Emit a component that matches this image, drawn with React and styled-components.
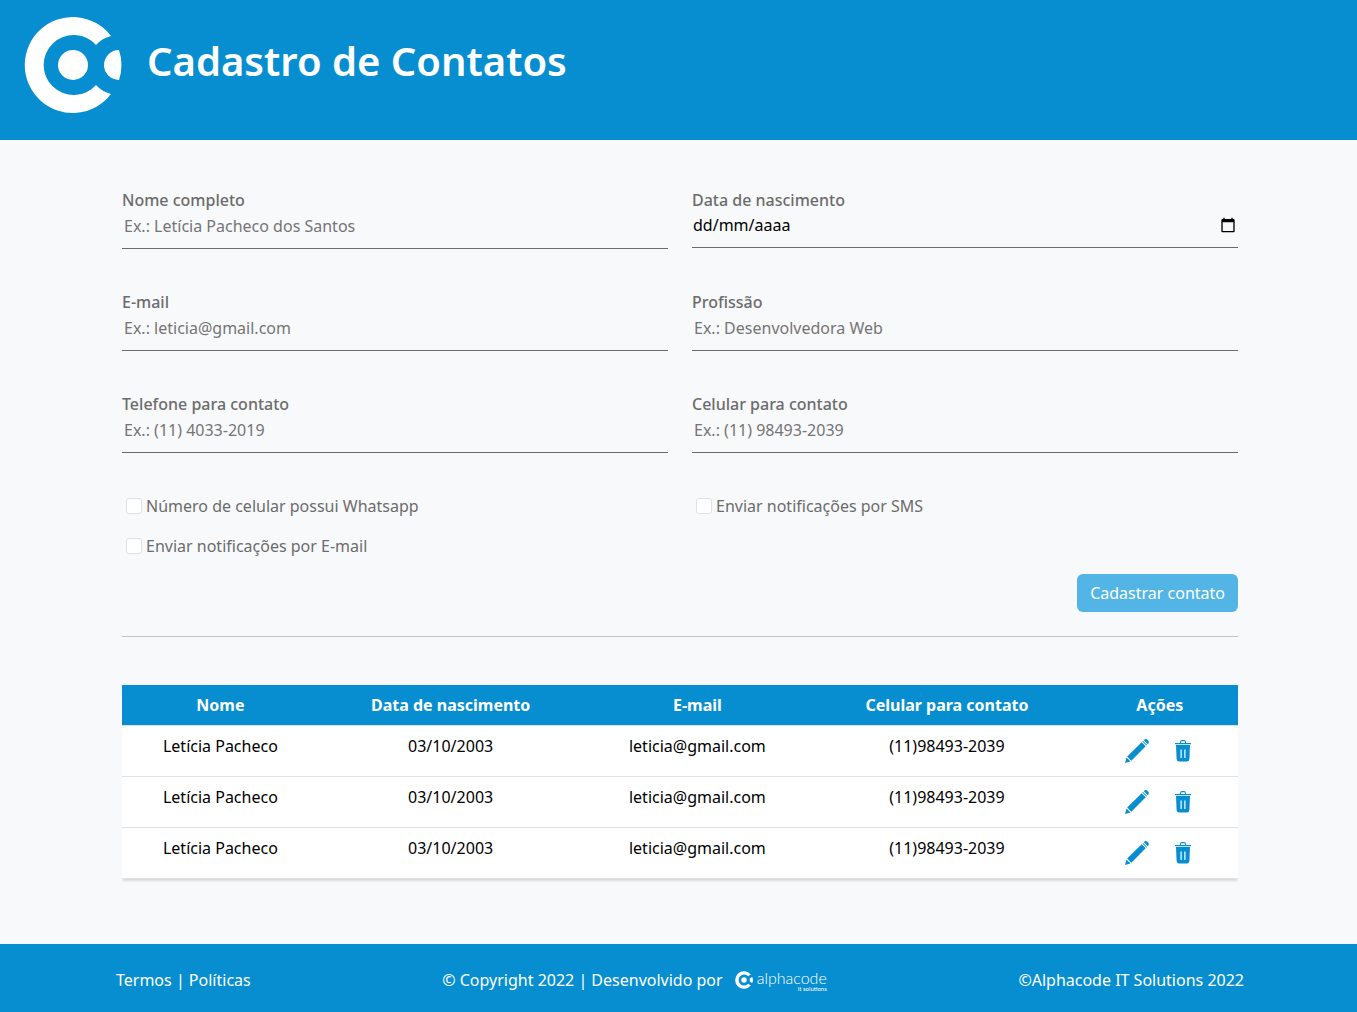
import React, { useState } from "react";
import styled, { createGlobalStyle, ThemeProvider } from "styled-components";

const theme = {
  primary: "#078ed0",
  primarySoft: "#53b5e6",
  muted: "#6c6c6c",
  page: "#f8f9fb",
  line: "#dee2e6",
};

const GlobalStyle = createGlobalStyle`
  *, *::before, *::after { box-sizing: border-box; }
  body {
    margin: 0;
    background: ${({ theme }) => theme.page};
    color: #000;
    font: 400 16px/24px "Noto Sans", "Open Sans", sans-serif;
  }
`;

const Page = styled.div`
  display: flex;
  flex-direction: column;
  min-height: 100vh;
`;

const Header = styled.header`
  display: flex;
  align-items: flex-start;
  gap: 25px;
  height: 140px;
  padding: 16px 24px;
  background: ${({ theme }) => theme.primary};
  color: #fff;
`;

const Title = styled.h1`
  margin: 21px 0 0;
  font-size: 40px;
  font-weight: 600;
  line-height: 48px;
`;

const Main = styled.main`
  flex: 1;
  width: 100%;
  max-width: 1143px;
  margin: 0 auto;
  padding: 48px 12px 64px 15px;
`;

const FormGrid = styled.form`
  display: grid;
  grid-template-columns: 1fr 1fr;
  column-gap: 24px;
`;

const Field = styled.div`
  display: flex;
  flex-direction: column;
  height: 102px;
`;

const Label = styled.label`
  color: ${({ theme }) => theme.muted};
  font-weight: 500;
`;

const InputLine = styled.div`
  display: flex;
  align-items: flex-start;
  height: ${({ $short }) => ($short ? "36px" : "37px")};
  border-bottom: 1px solid ${({ theme }) => theme.muted};
`;

const Input = styled.input`
  flex: 1;
  min-width: 0;
  height: 28px;
  padding: 1px 2px;
  border: 0;
  outline: 0;
  background: transparent;
  color: #000;
  font: inherit;

  &::placeholder {
    color: #757575;
    opacity: 1;
  }
`;

const DateInput = styled(Input)`
  height: 26px;
  padding: 1px;

  &::placeholder {
    color: #000;
  }
`;

const PickerButton = styled.button`
  display: flex;
  padding: 5px 2px;
  border: 0;
  background: transparent;
  cursor: pointer;
`;

const CheckRow = styled.div`
  display: flex;
  align-items: center;
  gap: 4px;
  height: 40px;
  padding: 0 4px 16px;
  color: ${({ theme }) => theme.muted};
`;

const Checkbox = styled.input`
  appearance: none;
  width: 16px;
  height: 16px;
  margin: 0;
  border: 1px solid ${({ theme }) => theme.line};
  border-radius: 3px;
  background: #fff;

  &:checked {
    background: ${({ theme }) => theme.primary};
  }
`;

const FormActions = styled.div`
  grid-column: 1 / -1;
  display: flex;
  justify-content: flex-end;
  padding-bottom: 24px;
  border-bottom: 1px solid #c1c3c4;
`;

const SubmitButton = styled.button`
  height: 38px;
  padding: 0 13px;
  border: 0;
  border-radius: 6px;
  background: ${({ theme }) => theme.primarySoft};
  color: #fff;
  font: inherit;
  cursor: pointer;
`;

const Table = styled.table`
  width: 100%;
  margin-top: 48px;
  border-collapse: collapse;
  background: #fff;
  text-align: center;
  box-shadow: 0 3px 2px -1px #00000020;
`;

const Th = styled.th`
  padding: 8px;
  background: ${({ theme }) => theme.primary};
  color: #fff;
  font-weight: 700;
`;

const Td = styled.td`
  height: 51px;
  padding: 8px;
  border-top: 1px solid ${({ theme }) => theme.line};
  border-bottom: 1px solid ${({ theme }) => theme.line};
  vertical-align: top;
`;

const RowActions = styled.div`
  display: flex;
  justify-content: center;
  gap: 4px;
`;

const IconButton = styled.button`
  display: flex;
  justify-content: center;
  width: 42px;
  padding: 5px 0;
  border: 0;
  background: transparent;
  color: ${({ theme }) => theme.primary};
  cursor: pointer;
`;

const Footer = styled.footer`
  background: ${({ theme }) => theme.primary};
  color: #fff;
`;

const FooterInner = styled.div`
  display: flex;
  align-items: center;
  justify-content: space-between;
  max-width: 1155px;
  height: 68px;
  margin: 0 auto;
  padding: 4px 12px 0 15px;
`;

const FooterLink = styled.a`
  color: inherit;
  text-decoration: none;
`;

const Credit = styled.span`
  display: flex;
  align-items: center;
  gap: 12px;
`;

const Brand = styled.span`
  display: flex;
  align-items: center;
  gap: 4px;
`;

const BrandText = styled.span`
  display: flex;
  flex-direction: column;
  align-items: flex-end;
  padding-top: 2px;
  font-family: Lato, sans-serif;
`;

const BrandName = styled.span`
  font-size: 16px;
  font-weight: 300;
  line-height: 14px;
`;

const BrandTag = styled.span`
  font-size: 6px;
  line-height: 7px;
`;

function LogoMark({ size }) {
  return (
    <svg width={size} height={size} viewBox="0 0 98 98" fill="#fff" aria-hidden="true">
      <path d="M87 20A48 48 0 1 0 87 78A30 30 0 0 1 72 69A30 30 0 1 1 72 29A30 30 0 0 1 87 20Z" />
      <circle cx="49" cy="49" r="15" />
      <path d="M95 34A15 15 0 0 0 95 64A48 48 0 0 0 95 34Z" />
    </svg>
  );
}

function CalendarIcon() {
  return (
    <svg width="16" height="16" viewBox="0 0 24 24" aria-hidden="true">
      <path d="M20 3h-1V1h-2v2H7V1H5v2H4c-1.100 0-2 .9-2 2v16c0 1.100.9 2 2 2h16c1.100 0 2-.9 2-2V5c0-1.100-.9-2-2-2zm0 18H4V8h16v13z" />
    </svg>
  );
}

function PencilIcon() {
  return (
    <svg width="24" height="24" viewBox="0 0 24 24" fill="currentColor" aria-hidden="true">
      <path d="M0 24l1.500-5.500 4 4zM2.200 17.600L16.700 3.300l4 4L6.300 21.700zM17.400 2.600l.7-.7 4 4-.7.700zM18.800 1.200c1.200-1.400 2.600-1.500 3.900-.2 1.500 1.400 1.500 2.800.1 4.200z" />
    </svg>
  );
}

function TrashIcon() {
  return (
    <svg width="24" height="24" viewBox="0 0 24 24" fill="currentColor" aria-hidden="true">
      <path d="M4 4h5V3q0-2 2-2h2q2 0 2 2v1h5v1.200H4zM10 4h4V3q0-.8-.8-.8h-2.400Q10 2.200 10 3z" fillRule="evenodd" />
      <path fillRule="evenodd" d="M5 6h14l-.6 14q-.2 2.500-2.500 2.500H8.100q-2.300 0-2.500-2.500zM9.500 10.500v8.500h1.200v-8.500zM13.300 10.500v8.500h1.200v-8.500z" />
    </svg>
  );
}

const fields = [
  { id: "nome", label: "Nome completo", placeholder: "Ex.: Letícia Pacheco dos Santos" },
  { id: "nascimento", label: "Data de nascimento", placeholder: "dd/mm/aaaa", date: true },
  { id: "email", label: "E-mail", placeholder: "Ex.: leticia@gmail.com", type: "email" },
  { id: "profissao", label: "Profissão", placeholder: "Ex.: Desenvolvedora Web" },
  { id: "telefone", label: "Telefone para contato", placeholder: "Ex.: (11) 4033-2019", type: "tel" },
  { id: "celular", label: "Celular para contato", placeholder: "Ex.: (11) 98493-2039", type: "tel" },
];

const options = [
  { id: "whatsapp", label: "Número de celular possui Whatsapp" },
  { id: "sms", label: "Enviar notificações por SMS" },
  { id: "aviso-email", label: "Enviar notificações por E-mail" },
];

const columns = ["Nome", "Data de nascimento", "E-mail", "Celular para contato", "Ações"];

const initialContacts = [1, 2, 3].map((id) => ({
  id,
  nome: "Letícia Pacheco",
  nascimento: "03/10/2003",
  email: "leticia@gmail.com",
  celular: "(11)98493-2039",
}));

export default function App() {
  const [contacts, setContacts] = useState(initialContacts);
  const remove = (id) => setContacts((list) => list.filter((c) => c.id !== id));

  return (
    <ThemeProvider theme={theme}>
      <GlobalStyle />
      <Page>
        <Header>
          <LogoMark size={98} />
          <Title>Cadastro de Contatos</Title>
        </Header>

        <Main>
          <FormGrid onSubmit={(e) => e.preventDefault()}>
            {fields.map(({ id, label, placeholder, type = "text", date }) => (
              <Field key={id}>
                <Label htmlFor={id}>{label}</Label>
                <InputLine $short={date}>
                  {date ? (
                    <>
                      <DateInput id={id} placeholder={placeholder} inputMode="numeric" />
                      <PickerButton type="button" aria-label="Abrir calendário">
                        <CalendarIcon />
                      </PickerButton>
                    </>
                  ) : (
                    <Input id={id} type={type} placeholder={placeholder} />
                  )}
                </InputLine>
              </Field>
            ))}
            {options.map(({ id, label }) => (
              <CheckRow key={id}>
                <Checkbox type="checkbox" id={id} />
                <label htmlFor={id}>{label}</label>
              </CheckRow>
            ))}
            <FormActions>
              <SubmitButton type="submit">Cadastrar contato</SubmitButton>
            </FormActions>
          </FormGrid>

          <Table>
            <thead>
              <tr>
                {columns.map((name) => (
                  <Th key={name} scope="col">{name}</Th>
                ))}
              </tr>
            </thead>
            <tbody>
              {contacts.map((c) => (
                <tr key={c.id}>
                  <Td>{c.nome}</Td>
                  <Td>{c.nascimento}</Td>
                  <Td>{c.email}</Td>
                  <Td>{c.celular}</Td>
                  <Td>
                    <RowActions>
                      <IconButton type="button" aria-label="Editar"><PencilIcon /></IconButton>
                      <IconButton type="button" aria-label="Excluir" onClick={() => remove(c.id)}>
                        <TrashIcon />
                      </IconButton>
                    </RowActions>
                  </Td>
                </tr>
              ))}
            </tbody>
          </Table>
        </Main>

        <Footer>
          <FooterInner>
            <span>
              <FooterLink href="#termos">Termos</FooterLink> | <FooterLink href="#politicas">Políticas</FooterLink>
            </span>
            <Credit>
              © Copyright 2022 | Desenvolvido por
              <Brand>
                <LogoMark size={18} />
                <BrandText>
                  <BrandName>alphacode</BrandName>
                  <BrandTag>it solutions</BrandTag>
                </BrandText>
              </Brand>
            </Credit>
            <span>©Alphacode IT Solutions 2022</span>
          </FooterInner>
        </Footer>
      </Page>
    </ThemeProvider>
  );
}
